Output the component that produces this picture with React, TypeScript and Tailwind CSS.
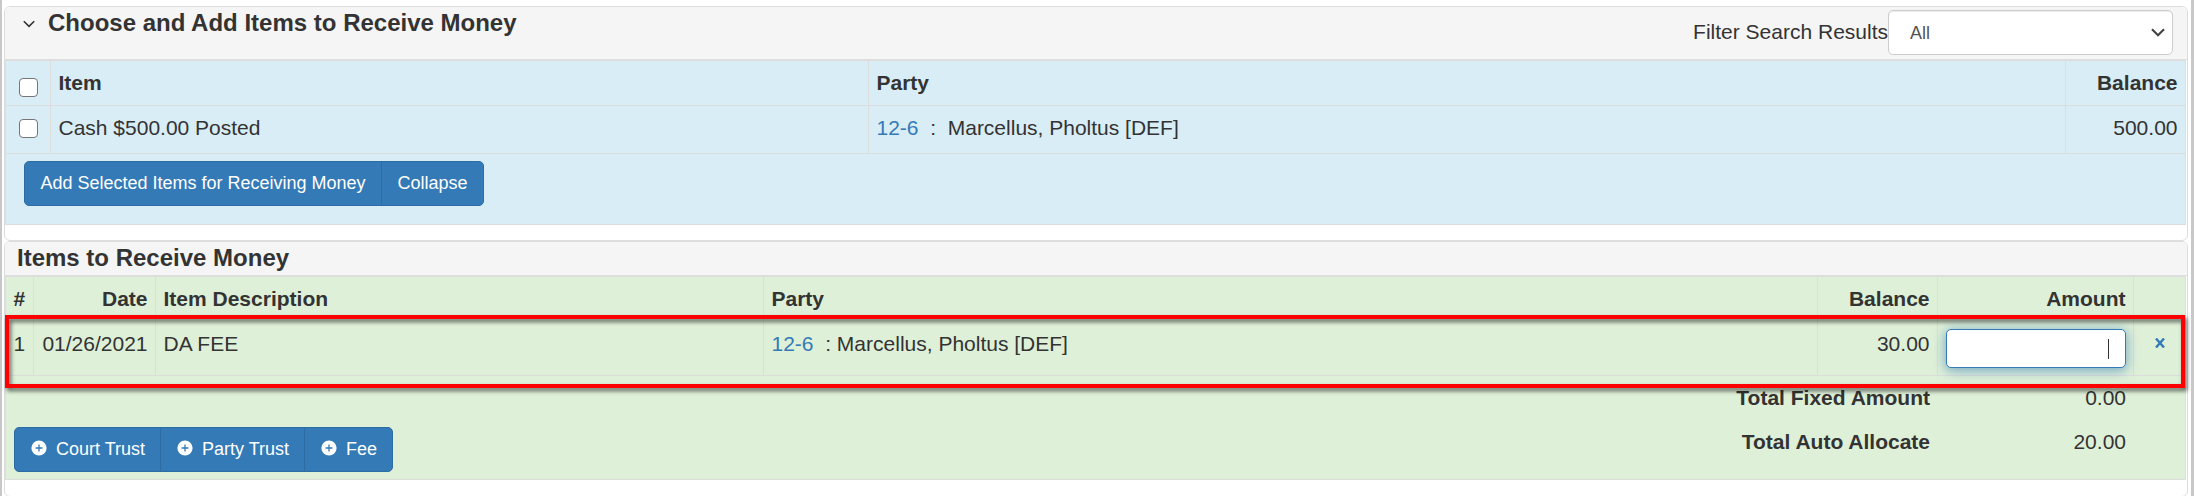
import React from "react";

type BoxProps = { className?: string; children?: React.ReactNode };

const Cell = ({ className = "", children }: BoxProps) => (
  <div className={`border-r border-b border-[#ddd] whitespace-pre leading-[30px] ${className}`}>{children}</div>
);

const Panel = ({ className = "", children }: BoxProps) => (
  <section className={`ml-0.5 w-[2184px] rounded-md border border-[#ddd] bg-white ${className}`}>{children}</section>
);

const Checkbox = () => (
  <div className="size-[19px] rounded-[4px] border border-[#767676] bg-white" />
);

const GroupButton = ({ className = "", children }: BoxProps) => (
  <button className={`flex h-full items-center border-[#2e6da4] pb-0.5 text-lg text-white ${className}`}>{children}</button>
);

const PlusCircle = () => (
  <svg viewBox="0 0 16 16" className="mb-0.5 size-4 shrink-0">
    <circle cx="8" cy="8" r="7.6" fill="#fff" />
    <path d="M8 4.5v7M4.5 8h7" stroke="#337ab7" strokeWidth="1.3" />
  </svg>
);

export default function App() {
  return (
    <main className="h-[496px] w-[2194px] overflow-hidden border-r-[3px] border-l-2 border-[#c8c8c8] bg-white pt-1.5 font-['Liberation_Sans',Arial,sans-serif] text-[21px] text-[#333]">
      <Panel className="h-[235px]">
        <header className="flex h-[53px] rounded-t-[5px] border-b border-[#ddd] bg-[#f5f5f5]">
          <svg viewBox="0 0 12 8" className="mt-[13px] ml-[18px] h-2 w-3" fill="none" stroke="#333" strokeWidth="1.6">
            <path d="M0.8 1.2 6 6.4l5.2-5.2" />
          </svg>
          <h2 className="mt-px ml-[13px] text-2xl leading-[30px] font-bold whitespace-nowrap">Choose and Add Items to Receive Money</h2>
          <div className="mt-[3px] mr-[14px] ml-auto flex h-[45px]">
            <label className="pt-[7px] leading-[30px] whitespace-nowrap">Filter Search Results</label>
            <div className="flex w-[285px] items-center justify-between rounded-[5px] border border-[#ccc] bg-white pr-[7px] pl-[21px] text-lg text-[#555] shadow-[inset_0_1px_1px_rgba(0,0,0,0.075)]">
              <span>All</span>
              <svg viewBox="0 0 14 9" className="h-[9px] w-[14px]" fill="none" stroke="#444" strokeWidth="2.2">
                <path d="M1 1.2 7 7.2l6-6" />
              </svg>
            </div>
          </div>
        </header>
        <div className="w-[2181px] border border-r-0 border-[#ddd] bg-[#d9edf7]">
          <div className="grid grid-cols-[45px_818px_1197px_120px] grid-rows-[45px_48px]">
            <Cell className="pt-[17px] pl-[13px]"><Checkbox /></Cell>
            <Cell className="pt-[7px] pl-[7.5px] font-bold">Item</Cell>
            <Cell className="pt-[7px] pl-[7.5px] font-bold">Party</Cell>
            <Cell className="pt-[7px] pr-[7.5px] text-right font-bold">Balance</Cell>
            <Cell className="pt-[13px] pl-[13px]"><Checkbox /></Cell>
            <Cell className="pt-[7px] pl-[7.5px]">Cash $500.00 Posted</Cell>
            <Cell className="pt-[7px] pl-[7.5px]"><a className="text-[#337ab7]">12-6</a>{"  :  Marcellus, Pholtus [DEF]"}</Cell>
            <Cell className="pt-[7px] pr-[7.5px] text-right">500.00</Cell>
          </div>
          <div className="flex h-[70px] border-r border-[#ddd] pt-[7px] pl-[18px]">
            <div className="flex h-[45px] w-[460px] overflow-hidden rounded-[5px] border border-[#2e6da4] bg-[#337ab7]">
              <GroupButton className="w-[357px] justify-center border-r">Add Selected Items for Receiving Money</GroupButton>
              <GroupButton className="flex-1 justify-center">Collapse</GroupButton>
            </div>
          </div>
        </div>
      </Panel>

      <Panel className="relative h-[256px]">
        <header className="flex h-[34px] rounded-t-[5px] border-b border-[#ddd] bg-[#f5f5f5]">
          <h2 className="ml-3 text-2xl leading-[32px] font-bold whitespace-nowrap">Items to Receive Money</h2>
        </header>
        <div className="w-[2181px] border border-r-0 border-[#ddd] bg-[#dff0d8]">
          <div className="grid grid-cols-[28px_122px_608px_1054px_120px_196px_52px] grid-rows-[41px_58px]">
            <Cell className="pt-[7px] pl-[7.5px] font-bold">#</Cell>
            <Cell className="pt-[7px] pr-[7.5px] text-right font-bold">Date</Cell>
            <Cell className="pt-[7px] pl-[7.5px] font-bold">Item Description</Cell>
            <Cell className="pt-[7px] pl-[7.5px] font-bold">Party</Cell>
            <Cell className="pt-[7px] pr-[7.5px] text-right font-bold">Balance</Cell>
            <Cell className="pt-[7px] pr-[7.5px] text-right font-bold">Amount</Cell>
            <Cell />
            <Cell className="pt-[11px] pl-[7.5px]">1</Cell>
            <Cell className="pt-[11px] pr-[7.5px] text-right">01/26/2021</Cell>
            <Cell className="pt-[11px] pl-[7.5px]">DA FEE</Cell>
            <Cell className="pt-[11px] pl-[7.5px]"><a className="text-[#337ab7]">12-6</a>{"  : Marcellus, Pholtus [DEF]"}</Cell>
            <Cell className="pt-[11px] pr-[7.5px] text-right">30.00</Cell>
            <Cell className="flex pt-[11px] pl-2">
              <div className="flex h-[39px] w-[180px] items-center justify-end rounded-[5px] border border-[#337ab7] bg-white pr-4 shadow-[0_2px_12px_1px_rgba(51,122,183,0.6)]">
                <span className="h-5 w-px bg-[#333]" />
              </div>
            </Cell>
            <Cell className="pt-[20px] pl-[21px]">
              <svg viewBox="0 0 10 10" className="size-[10px]" stroke="#337ab7" strokeWidth="2.4">
                <path d="M1 .5l8 9M9 .5l-8 9" />
              </svg>
            </Cell>
          </div>
          <div className="flex h-[103px] justify-between border-r border-[#ddd]">
            <div className="mt-[51px] ml-2 flex h-[45px] w-[379px] overflow-hidden rounded-[5px] border border-[#2e6da4] bg-[#337ab7]">
              <GroupButton className="w-[146px] gap-[9px] border-r pl-4"><PlusCircle />Court Trust</GroupButton>
              <GroupButton className="w-[144px] gap-[9px] border-r pl-4"><PlusCircle />Party Trust</GroupButton>
              <GroupButton className="flex-1 gap-[9px] pl-4"><PlusCircle />Fee</GroupButton>
            </div>
            <div className="mt-[7px] mr-[59px] grid grid-cols-[400px_196px] grid-rows-[44px_44px] text-right leading-[30px]">
              <b>Total Fixed Amount</b>
              <span>0.00</span>
              <b>Total Auto Allocate</b>
              <span>20.00</span>
            </div>
          </div>
        </div>
        <div className="pointer-events-none absolute top-[73px] left-0 h-[73px] w-[2180px] border-4 border-[#f00] drop-shadow-[2px_3px_2px_rgba(0,0,0,0.6)]" />
      </Panel>
    </main>
  );
}
